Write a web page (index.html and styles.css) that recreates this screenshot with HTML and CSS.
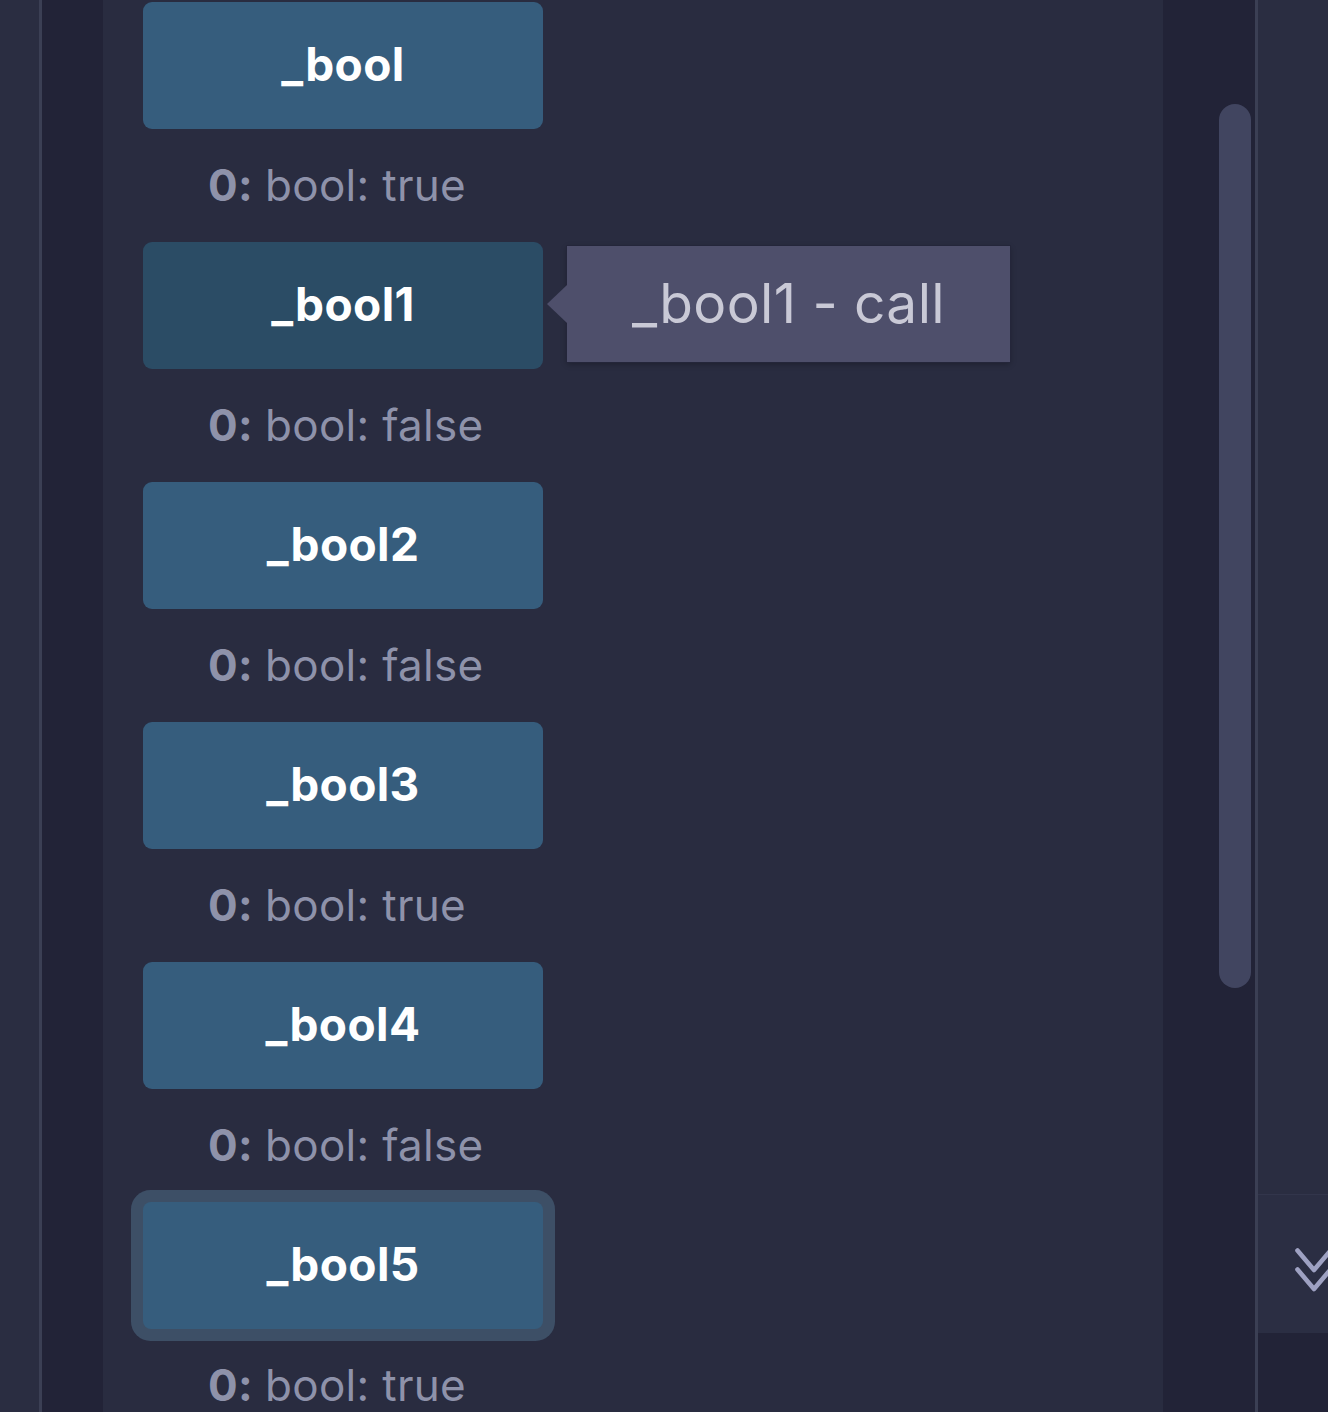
FILE: index.html
```html
<!DOCTYPE html>
<html>
<head>
<meta charset="utf-8">
<link rel="stylesheet" href="styles.css">
</head>
<body>
<div class="app">
  <div class="gutter"></div>
  <div class="rule"></div>
  <div class="sidebar"></div>
  <main class="main">
    <div class="list">
      <div class="item">
        <button class="fn">_bool</button>
        <div class="out"><b>0:</b> bool: true</div>
      </div>
      <div class="item">
        <button class="fn hover">_bool1</button>
        <div class="tooltip"><span class="arrow"></span>_bool1 - call</div>
        <div class="out"><b>0:</b> bool: false</div>
      </div>
      <div class="item">
        <button class="fn">_bool2</button>
        <div class="out"><b>0:</b> bool: false</div>
      </div>
      <div class="item">
        <button class="fn">_bool3</button>
        <div class="out"><b>0:</b> bool: true</div>
      </div>
      <div class="item">
        <button class="fn">_bool4</button>
        <div class="out"><b>0:</b> bool: false</div>
      </div>
      <div class="item">
        <button class="fn focus">_bool5</button>
        <div class="out"><b>0:</b> bool: true</div>
      </div>
    </div>
  </main>
  <div class="track"><div class="thumb"></div></div>
  <div class="rule"></div>
  <aside class="panel">
    <div class="panel-top"></div>
    <div class="collapse">
      <svg class="chev" width="40" height="48" viewBox="0 0 40 48">
        <path d="M2.5 2.5 L19 22 L35.5 2.5 M2.5 21.5 L19 41 L35.5 21.5" fill="none" stroke="#9ea1c2" stroke-width="4.6" stroke-linecap="round" stroke-linejoin="round"/>
      </svg>
    </div>
    <div class="panel-bottom"></div>
  </aside>
</div>
</body>
</html>
```
FILE: styles.css
```css
* { box-sizing: border-box; }
html, body { margin: 0; padding: 0; }
body {
  width: 1328px;
  height: 1412px;
  overflow: hidden;
  background: #292c40;
  font-family: Inter, "Noto Sans", sans-serif;
}
.app {
  display: flex;
  height: 1412px;
  width: 1328px;
}
.app > * {
  flex-shrink: 0;
}
.gutter {
  width: 39px;
  background: #2a2d41;
}
.rule {
  width: 3px;
  background: #3b3f54;
}
.sidebar {
  width: 61px;
  background: #222337;
}
.main {
  width: 1060px;
  background: #292c40;
  padding-left: 40px;
  padding-top: 2px;
}
.list {
  display: flex;
  flex-direction: column;
  width: 400px;
}
.item {
  position: relative;
  display: flex;
  flex-direction: column;
}
.fn {
  height: 127px;
  width: 400px;
  border: none;
  border-radius: 9px;
  background: #365d7d;
  color: #ffffff;
  font-family: Inter, "Noto Sans", sans-serif;
  font-weight: 700;
  font-size: 46px;
  letter-spacing: 0.4px;
  padding: 0;
  padding-bottom: 4px;
  cursor: pointer;
}
.fn.hover {
  background: #2b4c65;
}
.fn.focus {
  box-shadow: 0 0 0 12px #3d4f66;
  border-radius: 8px;
}
.out {
  height: 113px;
  display: flex;
  align-items: center;
  padding-left: 65px;
  padding-bottom: 2px;
  color: #8e92aa;
  font-size: 44px;
  font-weight: 400;
  letter-spacing: 0.3px;
  white-space: nowrap;
}
.out b {
  font-weight: 700;
  margin-right: 12px;
}
.tooltip {
  position: absolute;
  left: 424px;
  top: 4px;
  width: 443px;
  height: 116px;
  background: #4e4f6b;
  box-shadow: 0 0 0 1px #24263a, 0 2px 6px rgba(0,0,0,0.3);
  color: #c9c9d6;
  font-size: 55px;
  font-weight: 400;
  letter-spacing: 0.4px;
  display: flex;
  align-items: center;
  justify-content: center;
  padding-bottom: 2px;
  white-space: nowrap;
}
.arrow {
  position: absolute;
  left: -20px;
  top: 39px;
  width: 0;
  height: 0;
  border-top: 19px solid transparent;
  border-bottom: 19px solid transparent;
  border-right: 20px solid #4e4f6b;
}
.track {
  width: 92px;
  background: #222337;
  padding-top: 104px;
  padding-left: 56px;
}
.thumb {
  width: 32px;
  height: 884px;
  border-radius: 16px;
  background: #414560;
}
.panel {
  flex: 1 1 auto;
  min-width: 0;
  overflow: hidden;
  display: flex;
  flex-direction: column;
  background: #2a2d41;
}
.panel-top {
  height: 1194px;
}
.collapse {
  height: 139px;
  border-top: 1px solid #32354b;
  background: #2b2e43;
  padding-top: 53px;
  padding-left: 37px;
}
.chev {
  display: block;
}
.panel-bottom {
  flex: 1;
  background: #222337;
}
```
